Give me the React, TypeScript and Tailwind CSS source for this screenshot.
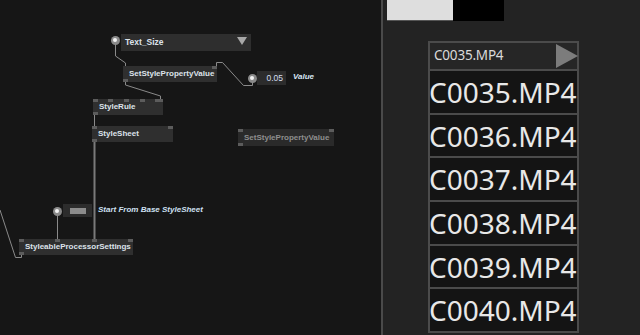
import React from "react";

type NodeProps = {
  x: number;
  y: number;
  w: number;
  h: number;
  label: string;
  dim?: boolean;
  ports?: number[];
  bottomLeft?: boolean;
};

function Node({ x, y, w, h, label, dim, ports = [], bottomLeft = true }: NodeProps) {
  return (
    <div
      className={`absolute flex items-center pl-[6px] ${dim ? "bg-[#2a2a2a] text-[#8e8e8e]" : "bg-[#2f2f2f] text-[#dde2ea]"} font-bold text-[8px] leading-none whitespace-nowrap`}
      style={{ left: x, top: y, width: w, height: h, fontFamily: '"Liberation Sans", Arial, sans-serif' }}
    >
      {ports.map((p, i) => (
        <span key={i} className="absolute top-0 w-[5px] h-[3px] bg-[#5c5c5c]" style={{ left: p }} />
      ))}
      {bottomLeft && <span className="absolute bottom-0 left-0 w-[5px] h-[3px] bg-[#5c5c5c]" />}
      <span className="absolute right-0 top-0 w-[5px] h-[3px] bg-[#5c5c5c]" />
      {label}
    </div>
  );
}

function Pin({ x, y }: { x: number; y: number }) {
  return (
    <div
      className="absolute w-[9px] h-[9px] rounded-full bg-[#8a8a8a] flex items-center justify-center"
      style={{ left: x - 4.5, top: y - 4.5 }}
    >
      <div className="w-[4px] h-[4px] rounded-full bg-[#f2f2f2]" />
    </div>
  );
}

const items = ["C0035.MP4", "C0036.MP4", "C0037.MP4", "C0038.MP4", "C0039.MP4", "C0040.MP4"];

export default function App() {
  return (
    <div className="w-[640px] h-[335px] flex overflow-hidden bg-[#161616]">
      {/* Left node canvas */}
      <div className="relative w-[381px] h-full bg-[#161616] shrink-0">
        <svg className="absolute inset-0" width="381" height="335" viewBox="0 0 381 335" fill="none">
          <g stroke="#8a8a8a" strokeWidth="1">
            <polyline points="115.5,44 115.5,56 125.5,63 125.5,66" />
            <polyline points="125.5,82 125.5,85 160.5,96 160.5,100" />
            <polyline points="216.5,66 216.5,62.5 222.5,62.5 243.5,85.5 252.5,85.5 252.5,82" />
            <polyline points="94.5,115 94.5,127" />
            <polyline points="57.5,214 57.5,240" />
            <polyline points="0,210 15.5,257.5 21.5,257.5 21.5,254" />
          </g>
          <line x1="94.5" y1="142" x2="94.5" y2="240" stroke="#7a7a7a" strokeWidth="2" />
        </svg>

        {/* Text_Size */}
        <Pin x={115} y={40} />
        <div
          className="absolute left-[121px] top-[34px] w-[130px] h-[17px] bg-[#2e2e2e] flex items-center pl-[4px] text-[#dde2ea] font-bold text-[8.5px] leading-none"
          style={{ fontFamily: '"Liberation Sans", Arial, sans-serif' }}
        >
          Text_Size
          <svg className="absolute right-[4px] top-[3px]" width="10" height="8" viewBox="0 0 10 8">
            <polygon points="0,0 10,0 5,8" fill="#a8a8a8" />
          </svg>
        </div>

        <Node x={123} y={66} w={94} h={16} label="SetStylePropertyValue" />

        {/* Value */}
        <Pin x={252} y={78} />
        <div
          className="absolute left-[257px] top-[71px] w-[29px] h-[14px] bg-[#2c2c2c] flex items-center justify-end pr-[3px] text-[#d5deec] text-[8.5px] leading-none"
          style={{ fontFamily: '"Liberation Sans", Arial, sans-serif' }}
        >
          0.05
        </div>
        <div
          className="absolute left-[293px] top-[73px] text-[#d8e6f4] italic font-bold text-[8px] leading-none"
          style={{ fontFamily: '"Liberation Sans", Arial, sans-serif' }}
        >
          Value
        </div>

        <Node x={93} y={99} w={70} h={16} label="StyleRule" ports={[0, 15, 31, 47, 62]} />
        <Node x={92} y={126} w={81} h={16} label="StyleSheet" ports={[0]} />

        <Node x={238} y={129} w={96} h={17} label="SetStylePropertyValue" dim ports={[0]} />

        {/* Start From Base */}
        <Pin x={57} y={211} />
        <div className="absolute left-[63px] top-[204px] w-[29px] h-[13px] bg-[#2c2c2c] flex items-center justify-center">
          <div className="w-[16px] h-[6px] bg-[#8c8c8c]" />
        </div>
        <div
          className="absolute left-[98px] top-[206px] text-[#cfe0f2] italic font-bold text-[8px] leading-none whitespace-nowrap"
          style={{ fontFamily: '"Liberation Sans", Arial, sans-serif' }}
        >
          Start From Base StyleSheet
        </div>

        <Node x={19} y={239} w={114} h={16} label="StyleableProcessorSettings" ports={[0, 36, 73]} />
      </div>

      {/* Divider */}
      <div className="w-[2px] h-full bg-[#4a4a4a] shrink-0" />

      {/* Right panel */}
      <div
        className="flex-1 h-full bg-[#232323] flex flex-col"
        style={{ fontFamily: '"Noto Sans", "Open Sans", sans-serif' }}
      >
        <div className="flex pl-[4px]">
          <div className="w-[66px] h-[21px] bg-[#dedede] border-b border-[#555]" />
          <div className="w-[51px] h-[21px] bg-black" />
        </div>

        <div className="ml-[45px] mt-[20px] w-[151px] border-2 border-[#4b4b4b] bg-[#4b4b4b] flex flex-col gap-[2px]">
          <div className="h-[26px] bg-[#262626] flex items-center justify-between pl-[4px]">
            <span className="text-[13.5px] leading-none text-[#dadada] tracking-[-0.2px]">C0035.MP4</span>
            <svg width="22" height="24" viewBox="0 0 22 24" className="mr-[-1px]">
              <polygon points="0,0 22,12 0,24" fill="#7c7c7c" />
            </svg>
          </div>
          {items.map((t) => (
            <div key={t} className="h-[41.7px] bg-[#141414] flex items-center overflow-hidden">
              <span className="text-[28px] leading-none text-[#e8e8e8] ml-[-1px]">{t}</span>
            </div>
          ))}
        </div>

        <div className="flex justify-between pl-[22px] pr-[2px]">
          <span className="text-[11px] leading-none text-[#c8c8c8]">Assign tasks to widgets</span>
          <span className="text-[11px] leading-none text-[#c8c8c8]">...</span>
        </div>
      </div>
    </div>
  );
}
